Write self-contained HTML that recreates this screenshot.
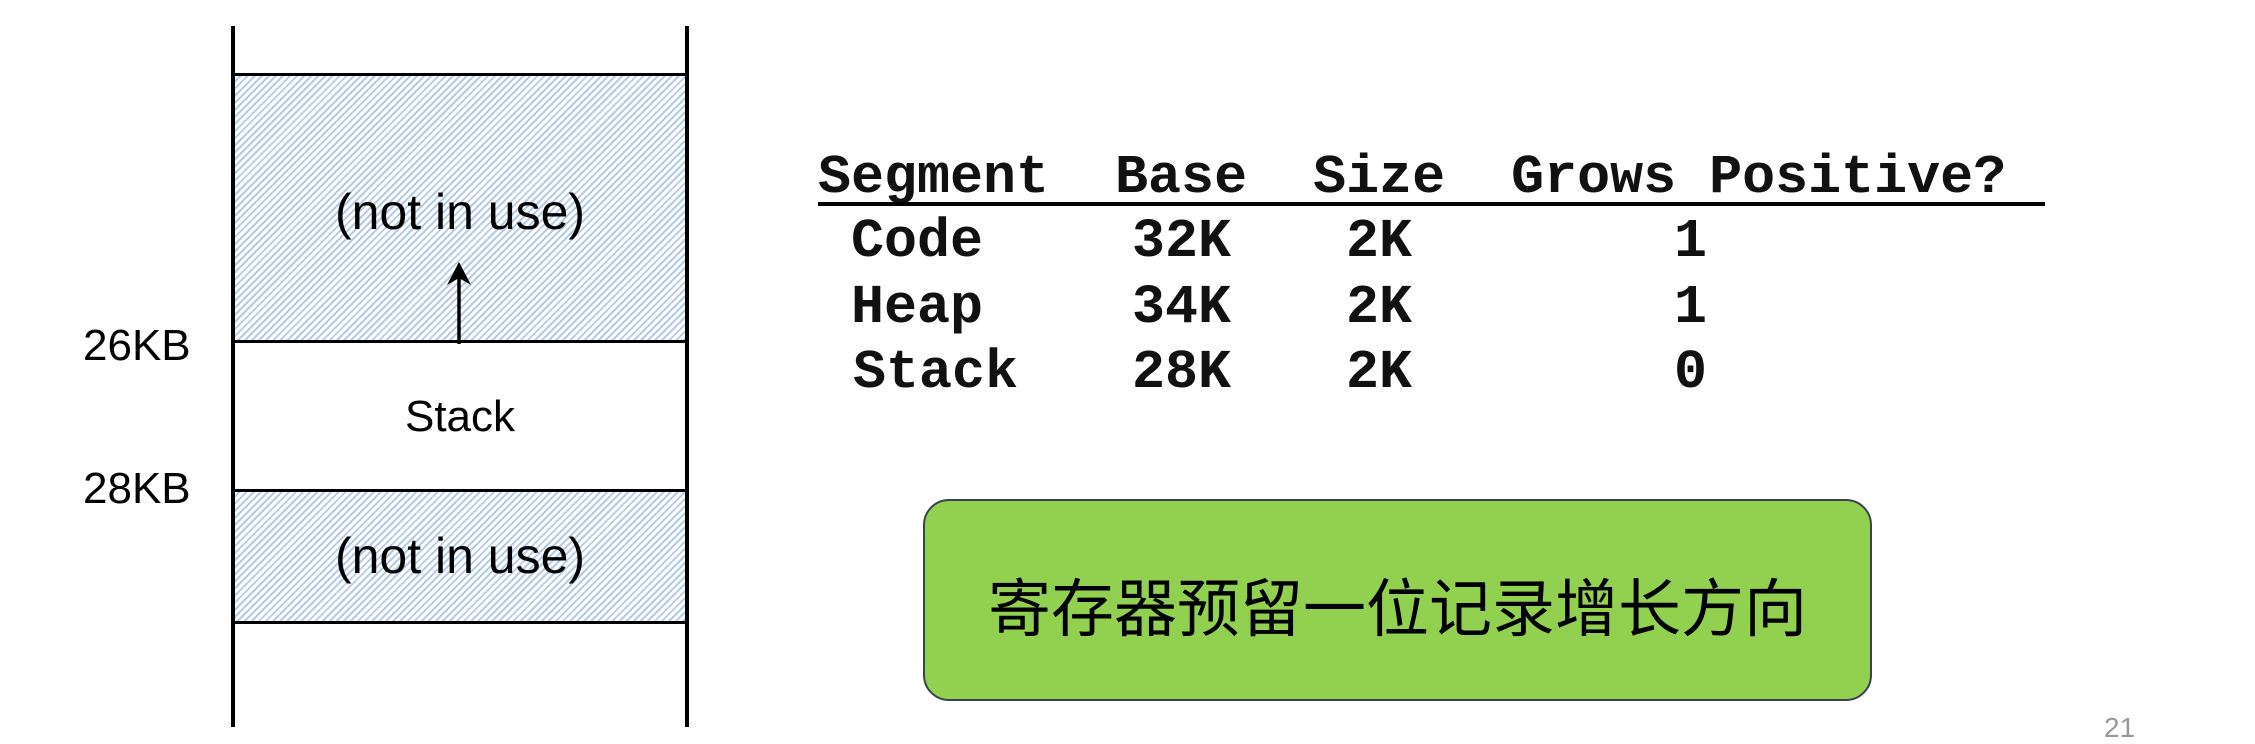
<!DOCTYPE html>
<html><head><meta charset="utf-8"><style>
body{margin:0;width:2255px;height:727px;background:#fff;position:relative;overflow:hidden;font-family:"Liberation Sans","Noto Sans CJK SC",sans-serif}
.a{position:absolute}
.hatch{background:repeating-linear-gradient(135deg,#b5cbe8 0 2px,#fff 2px 5px)}
.lbl{font-size:44px;color:#000;text-align:center;width:454px;left:233px}
.mono{font-family:"Liberation Mono",monospace;font-weight:bold;font-size:55px;line-height:1;color:#111}
</style></head><body>
<div class="a hatch" style="left:233px;top:75px;width:454px;height:267px"></div>
<div class="a hatch" style="left:233px;top:490px;width:454px;height:133px"></div>
<div class="a" style="left:231px;top:26px;width:4px;height:701px;background:#000"></div>
<div class="a" style="left:685px;top:26px;width:4px;height:701px;background:#000"></div>
<div class="a" style="left:233px;top:73px;width:454px;height:3px;background:#000"></div>
<div class="a" style="left:233px;top:340px;width:454px;height:3px;background:#000"></div>
<div class="a" style="left:233px;top:489px;width:454px;height:3px;background:#000"></div>
<div class="a" style="left:233px;top:621px;width:454px;height:3px;background:#000"></div>
<div class="a lbl" style="top:183px;font-size:50px">(not in use)</div>
<div class="a lbl" style="top:392px">Stack</div>
<div class="a lbl" style="top:527px;font-size:50px">(not in use)</div>
<svg class="a" style="left:440px;top:258px" width="40" height="86"><line x1="19" y1="14" x2="19" y2="86" stroke="#000" stroke-width="3.5"/><path d="M19 4 L31 27 L19 20 L7 27 Z" fill="#000"/></svg>
<div class="a" style="left:83px;top:321px;font-size:44px">26KB</div>
<div class="a" style="left:83px;top:464px;font-size:44px">28KB</div>
<div class="a mono" style="left:818px;top:150px;white-space:pre">Segment  Base  Size  Grows Positive?</div>
<div class="a" style="left:818px;top:202px;width:1227px;height:4px;background:#000"></div>
<div class="a mono" style="left:851px;top:214px">Code</div>
<div class="a mono" style="left:851px;top:280px">Heap</div>
<div class="a mono" style="left:853px;top:345px">Stack</div>
<div class="a mono" style="left:1132px;top:214px">32K</div>
<div class="a mono" style="left:1132px;top:280px">34K</div>
<div class="a mono" style="left:1132px;top:345px">28K</div>
<div class="a mono" style="left:1346px;top:214px">2K</div>
<div class="a mono" style="left:1346px;top:280px">2K</div>
<div class="a mono" style="left:1346px;top:345px">2K</div>
<div class="a mono" style="left:1674px;top:214px">1</div>
<div class="a mono" style="left:1674px;top:280px">1</div>
<div class="a mono" style="left:1674px;top:345px">0</div>
<div class="a" style="left:923px;top:499px;width:945px;height:198px;background:#92d050;border:2.5px solid #3b4150;border-radius:26px;display:flex;align-items:center;justify-content:center;font-size:63px;color:#000;padding-top:8px;box-sizing:content-box;height:190px">寄存器预留一位记录增长方向</div>
<div class="a" style="left:2104px;top:712px;font-size:28px;color:#999">21</div>
</body></html>
